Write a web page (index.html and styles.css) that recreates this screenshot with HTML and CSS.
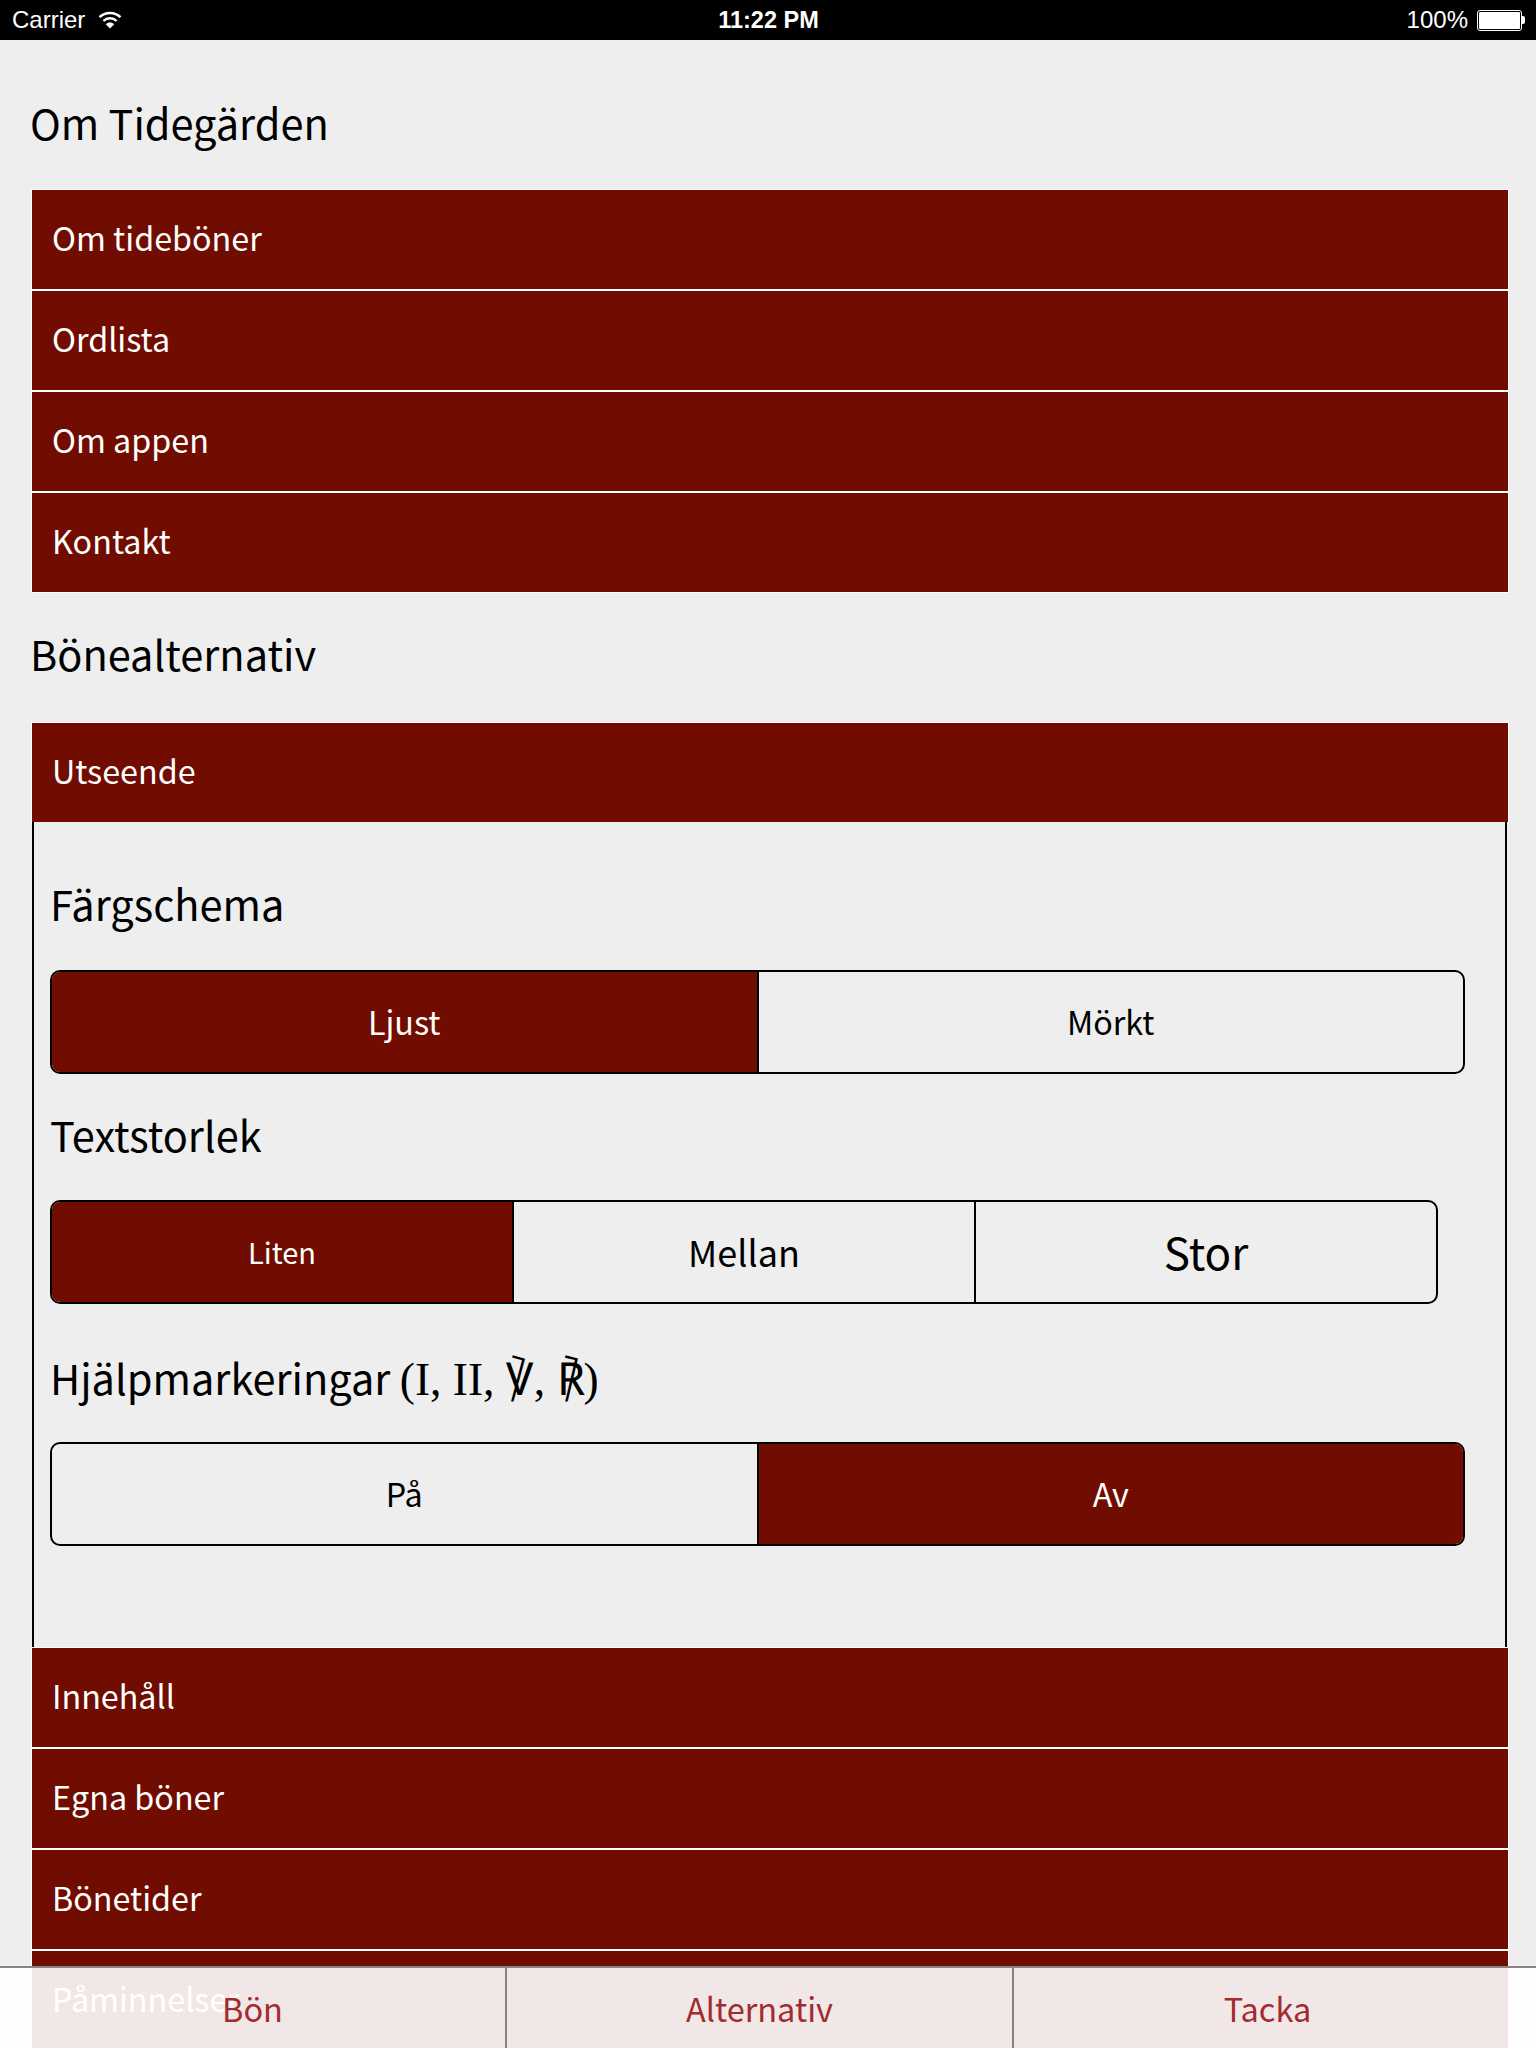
FILE: index.html
```html
<!DOCTYPE html>
<html lang="sv">
<head>
    <meta charset="UTF-8">
    <meta name="viewport" content="width=device-width, initial-scale=1.0">
    <title>Alternativ</title>
    <link rel="stylesheet" href="styles.css">
</head>
<body>

    <div class="page">

        <div class="status-bar">
            <div class="status-left">
                <span>Carrier</span>
                <svg class="wifi" width="24" height="18" viewBox="0 0 24 18">
                    <path d="M1.5 6.2C7.2 .6 16.8 .6 22.5 6.2" fill="none" stroke="#fff" stroke-width="2.4"/>
                    <path d="M5.4 10C9 6.4 15 6.4 18.6 10" fill="none" stroke="#fff" stroke-width="2.4"/>
                    <path d="M12 17.5L7.8 13.2C10 11 14 11 16.2 13.2Z" fill="#fff"/>
                </svg>
            </div>
            <div class="status-time">11:22 PM</div>
            <div class="status-right">
                <span>100%</span>
                <div class="battery"><div class="battery-fill"></div></div>
                <div class="battery-nub"></div>
            </div>
        </div>

        <div class="content">
            <h2 class="section-title first">Om Tidegärden</h2>
            <div class="menu">
                <div class="menu-item">Om tideböner</div>
                <div class="menu-item">Ordlista</div>
                <div class="menu-item">Om appen</div>
                <div class="menu-item">Kontakt</div>
            </div>

            <h2 class="section-title">Bönealternativ</h2>
            <div class="menu">
                <div class="menu-item">Utseende</div>
                <div class="panel">
                    <h3 class="panel-title">Färgschema</h3>
                    <div class="segments">
                        <div class="segment active">Ljust</div>
                        <div class="segment">Mörkt</div>
                    </div>

                    <h3 class="panel-title">Textstorlek</h3>
                    <div class="segments narrow">
                        <div class="segment active small">Liten</div>
                        <div class="segment medium">Mellan</div>
                        <div class="segment large">Stor</div>
                    </div>

                    <h3 class="panel-title tall">Hjälpmarkeringar <span class="serif">(I, II, ℣, ℟)</span></h3>
                    <div class="segments">
                        <div class="segment">På</div>
                        <div class="segment active">Av</div>
                    </div>
                </div>
                <div class="menu-item">Innehåll</div>
                <div class="menu-item">Egna böner</div>
                <div class="menu-item">Bönetider</div>
                <div class="menu-item">Påminnelser</div>
            </div>
        </div>

        <div class="tab-bar">
            <div class="tab">Bön</div>
            <div class="tab">Alternativ</div>
            <div class="tab">Tacka</div>
        </div>

    </div>

</body>
</html>
```

FILE: styles.css
```css
body {
    margin: 0;
    font-family: "Noto Sans CJK SC", "Open Sans", sans-serif;
    background-color: #eee;
    color: #000;
}

.page {
    position: relative;
    height: 2048px;
    overflow: hidden;
}

/* Status bar */
.status-bar {
    height: 40px;
    background-color: #000;
    color: #fff;
    display: grid;
    grid-template-columns: 1fr auto 1fr;
    align-items: center;
    padding: 0 11px 0 12px;
    font-family: "Liberation Sans", Arial, sans-serif;
    font-size: 24px;
}

.status-left {
    display: flex;
    align-items: center;
    gap: 13px;
}

.status-time {
    font-size: 23.5px;
    font-weight: bold;
}

.status-right {
    display: flex;
    align-items: center;
    justify-content: flex-end;
}

.battery {
    width: 41px;
    height: 17px;
    margin-left: 9px;
    border: 1px solid #fff;
    border-radius: 3px;
    padding: 1px;
}

.battery-fill {
    height: 100%;
    background-color: #fff;
    border-radius: 1px;
}

.battery-nub {
    width: 3px;
    height: 8px;
    background-color: #fff;
    border-radius: 0 2px 2px 0;
}

/* Main */
.content {
    padding: 0 27px 0 31px;
}

.section-title {
    margin: 0 0 0 -1px;
    height: 129px;
    line-height: 120px;
    font-size: 41.5px;
    font-weight: normal;
}

.section-title.first {
    height: 149px;
    line-height: 165px;
}

.menu-item {
    height: 99px;
    line-height: 95px;
    padding-left: 20px;
    background-color: #700c00;
    background-clip: padding-box;
    border: 1px solid #fff;
    color: #fff;
    font-size: 32.3px;
}

.panel {
    margin: -1px 2px 0 1px;
    height: 825px;
    box-sizing: border-box;
    padding: 0 40px 0 16px;
    border-left: 2px solid #000;
    border-right: 2px solid #000;
    background-color: #eee;
}

.panel-title {
    margin: 0;
    height: 148px;
    line-height: 162px;
    font-size: 41.5px;
    font-weight: normal;
}

.segments + .panel-title {
    height: 126px;
    line-height: 121px;
}

.segments + .panel-title.tall {
    height: 138px;
    line-height: 146px;
}

.serif {
    font-family: "Liberation Serif", "DejaVu Serif", serif;
    font-size: 45.5px;
}

.segments {
    display: flex;
    height: 104px;
    box-sizing: border-box;
    border: 2px solid #000;
    border-radius: 10px;
    overflow: hidden;
}

.segments.narrow {
    margin-right: 27px;
}

.segment {
    flex: 1;
    display: flex;
    align-items: center;
    justify-content: center;
    padding-bottom: 3px;
    font-size: 32.3px;
    border-left: 2px solid #000;
}

.segment:first-child {
    border-left: none;
}

.segment.active {
    background-color: #700c00;
    color: #fff;
}

.segment.small {
    font-size: 29px;
}

.segment.medium {
    font-size: 36px;
}

.segment.large {
    font-size: 44px;
}

/* Tab bar lies over the list */
.tab-bar {
    position: absolute;
    left: 0;
    right: 0;
    bottom: 0;
    height: 82px;
    box-sizing: border-box;
    display: flex;
    border-top: 2px solid #8c8282;
    background-color: rgba(255, 255, 255, 0.9);
}

.tab {
    flex: 0 0 507px;
    box-sizing: border-box;
    display: flex;
    align-items: center;
    justify-content: center;
    padding-bottom: 2px;
    font-size: 32.5px;
    color: #a32a2e;
    border-right: 2px solid #8c8282;
}

.tab:last-child {
    border-right: none;
}
```
